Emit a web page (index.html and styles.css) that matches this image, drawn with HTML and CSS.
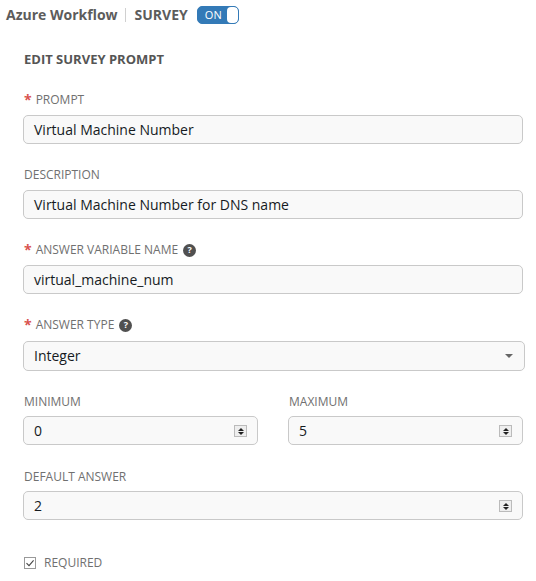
FILE: index.html
```html
<!DOCTYPE html>
<html>
<head>
<meta charset="utf-8">
<link rel="stylesheet" href="styles.css">
</head>
<body>
<div class="header">
  <span class="title">Azure Workflow</span>
  <span class="sep"></span>
  <span class="title">SURVEY</span>
  <span class="toggle"><span class="toggle-on">ON</span><span class="knob"></span></span>
</div>
<div class="panel">
  <h2 class="heading">EDIT SURVEY PROMPT</h2>

  <div class="field">
    <label class="label"><span class="req">*</span> PROMPT</label>
    <div class="input">Virtual Machine Number</div>
  </div>

  <div class="field">
    <label class="label">DESCRIPTION</label>
    <div class="input">Virtual Machine Number for DNS name</div>
  </div>

  <div class="field">
    <label class="label"><span class="req">*</span> ANSWER VARIABLE NAME <span class="help">?</span></label>
    <div class="input">virtual_machine_num</div>
  </div>

  <div class="field">
    <label class="label label-select"><span class="req">*</span> ANSWER TYPE <span class="help">?</span></label>
    <div class="input select">Integer<span class="caret"></span></div>
  </div>

  <div class="row">
    <div class="field col">
      <label class="label label-num">MINIMUM</label>
      <div class="input number">0<span class="spin"><span class="up"></span><span class="down"></span></span></div>
    </div>
    <div class="field col">
      <label class="label label-num">MAXIMUM</label>
      <div class="input number">5<span class="spin"><span class="up"></span><span class="down"></span></span></div>
    </div>
  </div>

  <div class="field field-default">
    <label class="label label-num">DEFAULT ANSWER</label>
    <div class="input number">2<span class="spin"><span class="up"></span><span class="down"></span></span></div>
  </div>

  <div class="check">
    <span class="box"><svg width="10" height="10" viewBox="0 0 10 10"><path d="M1.5 5.2 L4 7.6 L8.6 2.4" fill="none" stroke="#444" stroke-width="1.1"/></svg></span>
    <span class="check-label">REQUIRED</span>
  </div>
</div>
</body>
</html>
```
FILE: styles.css
```css
* { box-sizing: border-box; }
body {
  margin: 0;
  background: #fff;
  font-family: "Open Sans", "Noto Sans", sans-serif;
  color: #333;
}
.header {
  display: flex;
  align-items: center;
  height: 29px;
  padding-left: 6px;
}
.title {
  font-size: 14px;
  font-weight: 700;
  color: #5c5c5c;
}
.sep {
  width: 1px;
  height: 14px;
  background: #d0d0d0;
  margin: 0 9px 0 7px;
}
.toggle {
  display: flex;
  align-items: center;
  margin-left: 9px;
  width: 42px;
  height: 18px;
  border: 1px solid #337ab7;
  border-radius: 5px;
  background: #337ab7;
  overflow: hidden;
}
.toggle-on {
  flex: 1;
  color: #fff;
  font-size: 11px;
  text-align: center;
  line-height: 16px;
  padding-left: 2px;
}
.knob {
  width: 11px;
  height: 16px;
  background: #fff;
  border-radius: 4px;
}
.panel {
  padding: 0 13px 0 23px;
}
.heading {
  margin: 21px 0 23px 1px;
  font-size: 13px;
  font-weight: 700;
  color: #555;
  line-height: 18px;
}
.field {
  margin-bottom: 22px;
}
.field-default {
  margin-top: 1px;
}
.label {
  display: flex;
  align-items: center;
  gap: 4px;
  font-size: 12px;
  color: #707070;
  line-height: 18px;
  margin: 0 0 6px 1px;
}
.label-select { margin-bottom: 7px; }
.label-num { margin-bottom: 5px; }
.req {
  color: #d9534f;
  font-weight: 700;
  font-size: 14px;
  line-height: 12px;
}
.help {
  display: inline-flex;
  align-items: center;
  justify-content: center;
  width: 13px;
  height: 13px;
  border-radius: 50%;
  background: #505050;
  color: #fff;
  font-size: 9px;
  font-weight: 700;
  margin-left: 1px;
}
.input {
  position: relative;
  height: 29px;
  border: 1px solid #c9c9c9;
  border-radius: 5px;
  background: #f9f9f9;
  font-size: 14px;
  line-height: 27px;
  padding-left: 10px;
  color: #161b1f;
}
.select {
  margin-right: -2px;
  height: 30px;
  line-height: 28px;
}
.caret {
  position: absolute;
  right: 11px;
  top: 12px;
  width: 0;
  height: 0;
  border-left: 4px solid transparent;
  border-right: 4px solid transparent;
  border-top: 4px solid #666;
}
.row {
  display: flex;
  gap: 30px;
}
.col { flex: 1; }
.spin {
  position: absolute;
  right: 10px;
  top: 8px;
  width: 13px;
  height: 12px;
  border: 1px solid #bbb;
  background: #eee;
  display: flex;
  flex-direction: column;
  align-items: center;
  justify-content: center;
  gap: 1px;
}
.up {
  width: 0; height: 0;
  border-left: 3px solid transparent;
  border-right: 3px solid transparent;
  border-bottom: 3px solid #222;
}
.down {
  width: 0; height: 0;
  border-left: 3px solid transparent;
  border-right: 3px solid transparent;
  border-top: 3px solid #222;
}
.check {
  display: flex;
  align-items: center;
  margin-top: 34px;
  margin-left: 1px;
}
.box {
  display: inline-flex;
  align-items: center;
  justify-content: center;
  width: 12px;
  height: 12px;
  border: 1px solid #999;
  background: #fff;
}
.check-label {
  margin-left: 8px;
  font-size: 12px;
  color: #707070;
}
```
